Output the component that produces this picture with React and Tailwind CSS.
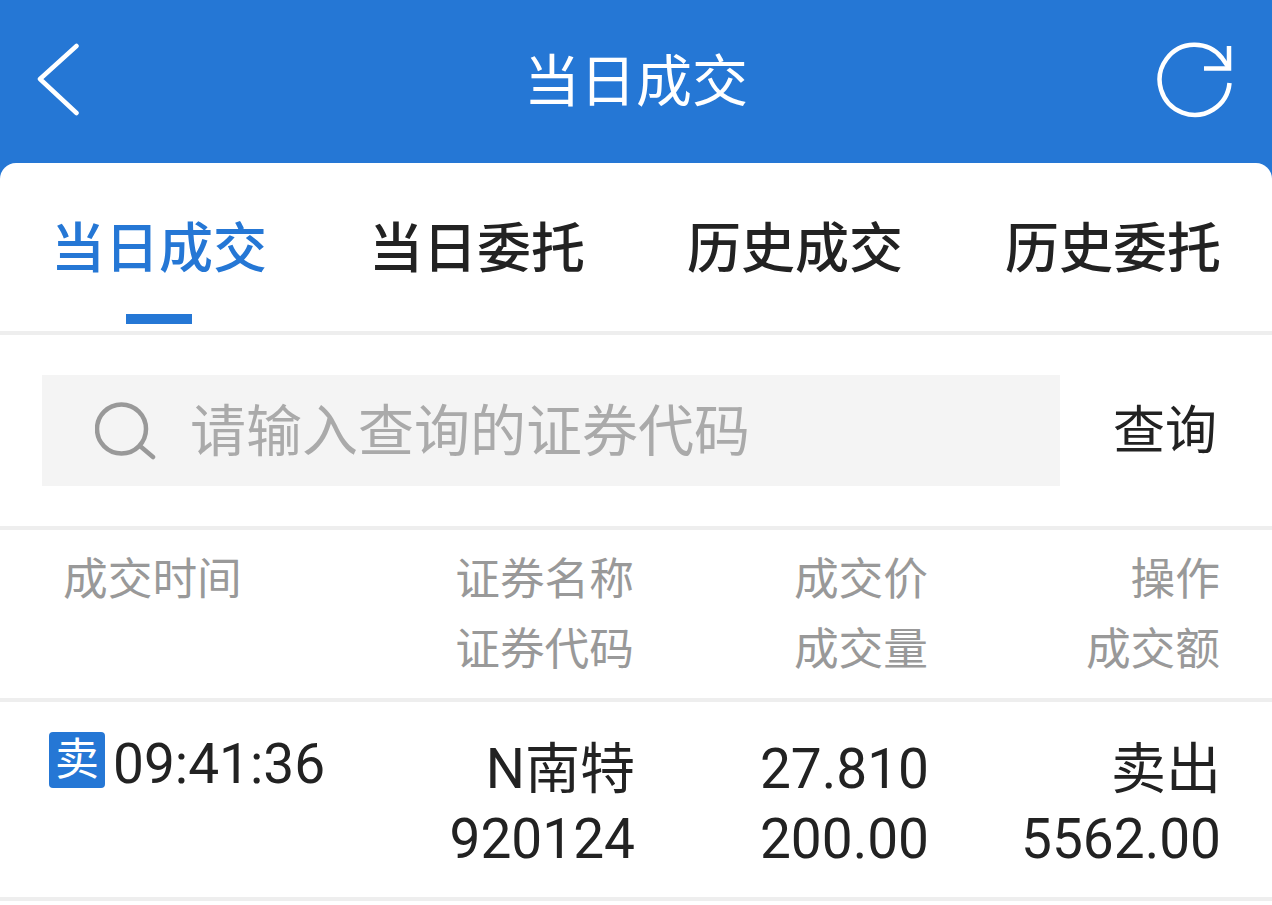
import React from 'react';

const tabs = ['当日成交', '当日委托', '历史成交', '历史委托'];

const BackIcon = () => (
  <svg width="44" height="74" viewBox="0 0 44 74" fill="none" stroke="white" strokeWidth="4.5" strokeLinecap="round" strokeLinejoin="round">
    <path d="M39.5 3 L3 36 L39.5 70" />
  </svg>
);

const RefreshIcon = () => (
  <svg width="78" height="78" viewBox="0 0 78 78" fill="none" stroke="white" strokeWidth="4.5">
    <path d="M73.5 42 A35 35 0 1 1 66 17 L73 27" />
    <path d="M73 5 V27.5 H48" />
  </svg>
);

const SearchIcon = () => (
  <svg width="62" height="58" viewBox="0 0 62 58" fill="none" stroke="#999999" strokeWidth="4.5" strokeLinecap="round">
    <circle cx="26.5" cy="27" r="24.5" />
    <path d="M45 44 L58 55" />
  </svg>
);

const App = () => {
  return (
    <div className="w-[1272px] h-[905px] overflow-hidden bg-[#2577d5] font-['Roboto','Noto_Sans_CJK_SC',sans-serif]">
      {/* title bar */}
      <div className="h-[163px] flex items-center justify-between pl-[37px] pr-[38px] pb-[4px] text-white">
        <div className="w-[79px]"><BackIcon /></div>
        <h1 className="text-[56px] leading-none font-normal mt-[4px]">当日成交</h1>
        <RefreshIcon />
      </div>

      <div className="bg-white rounded-t-[16px] h-[742px]">
        {/* tabs */}
        <div className="h-[172px] border-b-4 border-[#eeeeee] flex">
          {tabs.map((tab, i) => (
            <div key={tab} className="flex-1 flex flex-col items-center pt-[59px]">
              <span className={`text-[54px] leading-[55px] font-medium ${i === 0 ? 'text-[#2577d5]' : 'text-[#222222]'}`}>{tab}</span>
              {i === 0 && <div className="w-[66px] h-[10px] bg-[#2577d5] mt-[37px]" />}
            </div>
          ))}
        </div>

        {/* search */}
        <div className="h-[195px] border-b-4 border-[#eeeeee] flex items-center pl-[42px] pr-[55px] justify-between">
          <div className="w-[1018px] h-[111px] bg-[#f4f4f4] flex items-center pl-[53px] gap-[33px]">
            <SearchIcon />
            <span className="text-[56px] leading-none text-[#aaaaaa] mt-[3px]">请输入查询的证券代码</span>
          </div>
          <span className="text-[52px] leading-none text-[#222222] mt-[3px]">查询</span>
        </div>

        {/* table head */}
        <div className="h-[172px] border-b-4 border-[#eeeeee] flex pt-[15px] text-[44.7px] leading-[70px] text-[#999999]">
          <div className="w-[634px] flex justify-between pl-[63px]">
            <div>成交时间</div>
            <div className="text-right">证券名称<br />证券代码</div>
          </div>
          <div className="w-[294px] text-right">成交价<br />成交量</div>
          <div className="w-[292px] text-right">操作<br />成交额</div>
        </div>

        {/* row */}
        <div className="h-[199px] border-b-4 border-[#eeeeee] flex pt-[32px] text-[55px] leading-[70px] text-[#222222]">
          <div className="w-[635px] flex justify-between pl-[49px]">
            <div className="flex items-start">
              <span className="w-[56px] h-[56px] mt-[-2px] rounded-[4px] bg-[#2577d5] text-white text-[44px] leading-[56px] text-center">卖</span>
              <span className="ml-[8px] leading-[60px]">09:41:36</span>
            </div>
            <div className="text-right">N南特<br />920124</div>
          </div>
          <div className="w-[294px] text-right">27.810<br />200.00</div>
          <div className="w-[292px] text-right">卖出<br />5562.00</div>
        </div>
      </div>
    </div>
  );
};

export default App;
